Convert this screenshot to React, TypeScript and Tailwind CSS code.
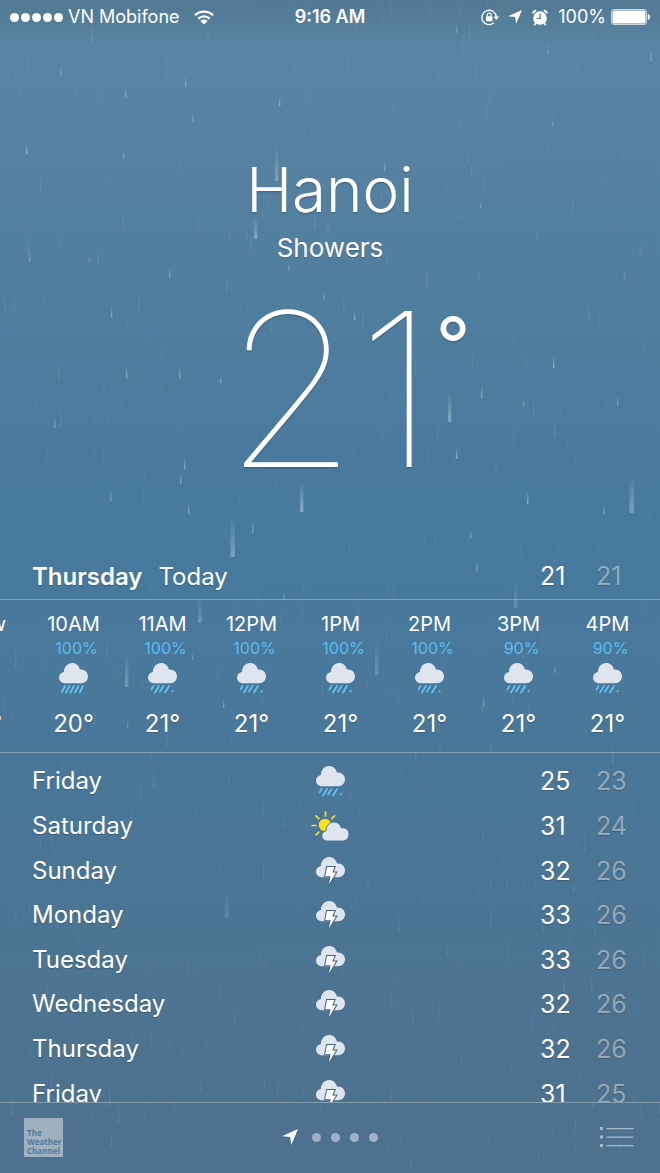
import React from "react";

type Condition = "rain" | "showers" | "partly" | "storm";

interface HourForecast {
  label: string;
  chance: string;
  condition: Condition;
  temp: string;
}

interface DayForecast {
  day: string;
  condition: Condition;
  high: number;
  low: number;
}

const hours: HourForecast[] = [
  { label: "Now", chance: "", condition: "rain", temp: "21°" },
  { label: "10AM", chance: "100%", condition: "rain", temp: "20°" },
  { label: "11AM", chance: "100%", condition: "showers", temp: "21°" },
  { label: "12PM", chance: "100%", condition: "showers", temp: "21°" },
  { label: "1PM", chance: "100%", condition: "showers", temp: "21°" },
  { label: "2PM", chance: "100%", condition: "showers", temp: "21°" },
  { label: "3PM", chance: "90%", condition: "showers", temp: "21°" },
  { label: "4PM", chance: "90%", condition: "showers", temp: "21°" },
];

const days: DayForecast[] = [
  { day: "Friday", condition: "showers", high: 25, low: 23 },
  { day: "Saturday", condition: "partly", high: 31, low: 24 },
  { day: "Sunday", condition: "storm", high: 32, low: 26 },
  { day: "Monday", condition: "storm", high: 33, low: 26 },
  { day: "Tuesday", condition: "storm", high: 33, low: 26 },
  { day: "Wednesday", condition: "storm", high: 32, low: 26 },
  { day: "Thursday", condition: "storm", high: 32, low: 26 },
  { day: "Friday", condition: "storm", high: 31, low: 25 },
];

// [x, bottom y, length, width, opacity]
const brightDrops: number[][] = [
  [277, 181, 36, 4, 0.3],
  [256, 239, 24, 4, 0.35],
  [302, 512, 30, 4, 0.45],
  [450, 422, 32, 4, 0.4],
  [632, 513, 38, 5, 0.35],
  [233, 557, 42, 5, 0.35],
  [127, 687, 34, 4, 0.3],
  [200, 623, 26, 4, 0.25],
  [377, 675, 34, 4, 0.25],
  [516, 608, 28, 4, 0.2],
  [227, 918, 28, 4, 0.15],
  [61, 75, 10, 2, 0.35],
  [126, 97, 12, 2, 0.4],
  [186, 87, 12, 2, 0.4],
  [193, 122, 10, 2, 0.3],
  [280, 106, 10, 2, 0.45],
  [27, 154, 12, 2, 0.5],
  [124, 159, 10, 2, 0.35],
  [30, 262, 14, 2, 0.35],
  [170, 278, 10, 2, 0.4],
  [112, 317, 10, 2, 0.45],
  [127, 379, 14, 2, 0.45],
  [180, 379, 14, 2, 0.4],
  [221, 383, 7, 2, 0.45],
  [55, 428, 13, 2, 0.4],
  [185, 469, 12, 2, 0.45],
  [181, 484, 12, 2, 0.4],
  [111, 501, 12, 2, 0.4],
  [189, 514, 13, 2, 0.4],
  [253, 533, 12, 2, 0.4],
  [385, 171, 12, 2, 0.35],
  [481, 208, 8, 2, 0.35],
  [553, 126, 10, 2, 0.25],
  [651, 61, 11, 2, 0.4],
  [548, 54, 8, 2, 0.3],
  [89, 262, 8, 1, 0.3],
  [355, 320, 10, 2, 0.4],
  [554, 368, 12, 2, 0.55],
  [482, 398, 13, 2, 0.5],
  [524, 406, 9, 2, 0.4],
  [618, 406, 12, 2, 0.35],
  [457, 459, 12, 2, 0.5],
  [528, 504, 14, 2, 0.5],
  [604, 514, 9, 2, 0.4],
  [471, 538, 9, 2, 0.45],
  [477, 571, 9, 2, 0.45],
  [324, 299, 7, 2, 0.4],
  [289, 271, 8, 2, 0.35],
  [224, 708, 9, 2, 0.4],
  [284, 599, 6, 2, 0.4],
  [193, 660, 8, 2, 0.3],
  [555, 673, 10, 2, 0.3],
  [484, 706, 9, 2, 0.35],
  [128, 728, 10, 2, 0.25],
  [92, 42, 16, 1, 0.3],
  [457, 33, 12, 2, 0.3],
];

// fine drizzle behind everything, spread by a small fixed-seed generator
const drizzle: number[][] = (() => {
  let seed = 71;
  const next = () => {
    seed = (seed * 16807) % 2147483647;
    return seed / 2147483647;
  };
  return Array.from({ length: 420 }, () => [
    Math.round(next() * 660),
    Math.round(next() * 1190),
    Math.round(8 + next() * 18),
    1 + Math.round(next()),
    0.04 + next() * 0.1,
  ]);
})();

const Rain: React.FC = () => (
  <svg
    className="pointer-events-none absolute inset-0 h-full w-full"
    viewBox="0 0 660 1173"
    preserveAspectRatio="xMidYMid slice"
    aria-hidden="true"
  >
    <defs>
      <linearGradient id="drop" x1="0" y1="0" x2="0" y2="1">
        <stop offset="0" stopColor="#d5eaf5" stopOpacity="0" />
        <stop offset="1" stopColor="#d5eaf5" />
      </linearGradient>
    </defs>
    {[...drizzle, ...brightDrops].map(([x, y, length, width, opacity], i) => (
      <rect
        key={i}
        x={x - width / 2}
        y={y - length}
        width={width > 1 ? width - 0.6 : width}
        height={length}
        rx={width > 3 ? 1 : 0}
        fill="url(#drop)"
        opacity={opacity}
      />
    ))}
  </svg>
);

const CloudShape: React.FC = () => (
  <path
    fill="#dfe5ee"
    d="M6.2 20.2C2.6 20.2 0 17.7 0 14.4c0-2.800 2-4.900 4.900-5.500C5 3.900 8.500 0 13.200 0c3.800 0 6.700 2.400 7.700 6.500 4.600-.6 8.100 2.500 8.100 6.800 0 4-2.900 6.900-6.900 6.900Z"
  />
);

const WeatherIcon: React.FC<{ condition: Condition }> = ({ condition }) => {
  if (condition === "partly") {
    return (
      <svg width="38" height="30" viewBox="0 0 38 30" role="img" aria-label="Partly cloudy">
        <g stroke="#ffe01b" strokeWidth="1.700" strokeLinecap="round">
          <path d="M14.500 1v4M23.500 4.800l-2.800 2.800M5 4.800l2.800 2.800M1 14.500h4M5 24l2.800-2.800" />
        </g>
        <circle cx="14" cy="14" r="6.200" fill="#ffe01b" />
        <path
          fill="#dfe5ee"
          stroke="#4a7696"
          strokeWidth="1"
          d="M16.500 30c-3.400 0-5.800-2.200-5.800-5.100 0-2.500 1.700-4.300 4.200-4.900.1-5.200 3.700-8.900 8.100-8.900 3.500 0 6.200 2.100 7.200 5.700 4.500-.5 7.800 2.300 7.800 6.400 0 4-2.800 6.800-6.600 6.800Z"
        />
      </svg>
    );
  }

  if (condition === "storm") {
    return (
      <svg width="29" height="28" viewBox="0 0 29 28" role="img" aria-label="Thunderstorms">
        <CloudShape />
        <path
          fill="#ffffff"
          stroke="#41657f"
          strokeWidth="2"
          paintOrder="stroke"
          d="M11 10h7.500l-2.300 5.500h3.800L12.800 27.500l1.800-8.300H9.200Z"
        />
      </svg>
    );
  }

  return (
    <svg
      width="29"
      height="31"
      viewBox="0 0 29 31"
      role="img"
      aria-label={condition === "rain" ? "Rain" : "Showers"}
    >
      <CloudShape />
      <path
        stroke="#62c2ef"
        strokeWidth="1.800"
        strokeLinecap="round"
        fill="none"
        d={
          condition === "rain"
            ? "M6 23l-3 6M10.500 23l-3.500 6.500M15 23l-3.500 6.500M19.500 23l-3.500 6.500M24 23l-3 6"
            : "M5.500 23l-2 3.500M11 23l-4 6.500M15.500 23l-3.500 5.500M21 23l-4 6.500M24.800 28l-.3.500"
        }
      />
    </svg>
  );
};

const LocationArrow: React.FC<{ size: number }> = ({ size }) => (
  <svg width={size} height={size} viewBox="0 0 16 16" aria-hidden="true">
    <path fill="#ffffff" d="M16 0 9.200 16 8.200 8.100 0 7.200Z" />
  </svg>
);

const StatusBar: React.FC = () => (
  <header className="grid h-[34px] grid-cols-[1fr_auto_1fr] items-center pr-[10px] pl-[10px] text-lg">
    <div className="flex items-center gap-[5px]">
      <div className="flex gap-[2px]">
        {[1, 2, 3, 4, 5].map((bar) => (
          <span key={bar} className="size-[9px] rounded-full bg-white" />
        ))}
      </div>
      <span>VN Mobifone</span>
      <svg width="20" height="15" viewBox="0 0 20 15" className="ml-[9px]" role="img" aria-label="Wi-Fi">
        <g fill="none" stroke="#ffffff" strokeWidth="2.200">
          <path d="M1 5.200a13 13 0 0 1 18 0" />
          <path d="M4.300 8.600a8.300 8.300 0 0 1 11.400 0" />
        </g>
        <path fill="#ffffff" d="M10 14.600 6.300 10.900a5.300 5.300 0 0 1 7.400 0Z" />
      </svg>
    </div>

    <span className="font-semibold">9:16 AM</span>

    <div className="flex items-center justify-end gap-[9px]">
      <svg width="18" height="17" viewBox="0 0 18 17" role="img" aria-label="Rotation locked">
        <path fill="none" stroke="#ffffff" strokeWidth="1.300" d="M13 13.800A7.200 7.200 0 1 1 15.300 8" />
        <path fill="#ffffff" d="M12.600 7.500H18l-2.700 3.600Z" />
        <rect x="5" y="7.200" width="6.400" height="5" rx=".6" fill="#ffffff" />
        <path fill="none" stroke="#ffffff" strokeWidth="1.200" d="M6.300 7.500V6a1.900 1.900 0 0 1 3.800 0v1.500" />
      </svg>
      <LocationArrow size={14} />
      <svg width="18" height="17" viewBox="0 0 18 17" role="img" aria-label="Alarm set">
        <circle cx="9" cy="9" r="6.800" fill="#ffffff" />
        <path
          fill="none"
          stroke="#ffffff"
          strokeWidth="1.800"
          strokeLinecap="round"
          d="M2 3.500 4.500 1.500M16 3.500l-2.500-2M4.500 14.500l-.8 1M13.500 14.500l.8 1"
        />
        <path fill="none" stroke="#52809f" strokeWidth="1.300" d="M9.200 4.800v4.500H5.800" />
      </svg>
      <div className="flex items-center gap-[5px]">
        <span>100%</span>
        <svg width="39" height="16" viewBox="0 0 39 16" role="img" aria-label="Battery full">
          <rect x=".5" y=".5" width="35" height="15" rx="2.500" fill="none" stroke="#ffffff" strokeOpacity=".7" />
          <rect x="1.500" y="1.500" width="33" height="13" rx="1.500" fill="#ffffff" />
          <path fill="#ffffff" d="M36.800 5c1.600.4 2.200 1.500 2.200 3s-.6 2.600-2.200 3Z" />
        </svg>
      </div>
    </div>
  </header>
);

const CurrentWeather: React.FC = () => (
  <section className="flex flex-col items-center pt-[116px] pb-[57px]">
    <h1 className="text-[62px] leading-[80px] font-light text-shadow-sm">Hanoi</h1>
    <p className="text-[26px] leading-9 text-shadow-xs">Showers</p>
    <p className="relative mt-4 text-[214px] leading-[216px] font-thin text-shadow-sm">
      21
      <span className="absolute top-0 left-full text-[76px] leading-[124px] font-normal">°</span>
    </p>
  </section>
);

const HourlyForecast: React.FC = () => (
  <section className="border-y border-white/30">
    <ul className="flex justify-end overflow-hidden pt-3 pr-2 pb-3">
      {hours.map((hour) => (
        <li key={hour.label} className="flex w-[89px] shrink-0 flex-col items-center">
          <span className="text-xl leading-6">{hour.label}</span>
          <span className="h-6 pl-[6px] text-base leading-6 text-[#5cbcf0]">{hour.chance}</span>
          <span className="mt-[3px] mb-[14px]">
            <WeatherIcon condition={hour.condition} />
          </span>
          <span className="text-2xl leading-8 text-shadow-xs">{hour.temp}</span>
        </li>
      ))}
    </ul>
  </section>
);

const DailyForecast: React.FC = () => (
  <section className="min-h-0 flex-1 overflow-hidden pt-[6px]">
    <table className="h-[357px] w-full table-fixed text-left text-[25px] leading-8">
      <tbody>
        {days.map((day, i) => (
          <tr key={i}>
            <th scope="row" className="p-0 pl-8 text-2xl font-normal text-shadow-xs">
              {day.day}
            </th>
            <td className="w-10 p-0">
              <div className="flex justify-center">
                <WeatherIcon condition={day.condition} />
              </div>
            </td>
            <td className="p-0">
              <div className="flex justify-end pr-8 text-shadow-xs">
                <span className="w-14">{day.high}</span>
                <span className="w-8 text-white/45">{day.low}</span>
              </div>
            </td>
          </tr>
        ))}
      </tbody>
    </table>
  </section>
);

const BottomBar: React.FC = () => (
  <footer className="grid h-[71px] shrink-0 grid-cols-[1fr_auto_1fr] items-center border-t border-white/30 px-6 pb-[2px]">
    <a
      href="#weather-channel"
      className="flex size-[39px] flex-col justify-end bg-white/45 pb-[2px] pl-[3px] font-['Open_Sans',sans-serif] text-[8px] leading-[9px] font-bold text-[#52799a]"
    >
      <span>The</span>
      <span>Weather</span>
      <span>Channel</span>
    </a>

    <nav className="flex items-center gap-[10px]" aria-label="Locations">
      <button type="button" aria-label="Current location" className="mr-1">
        <LocationArrow size={16} />
      </button>
      {[1, 2, 3, 4].map((page) => (
        <button
          key={page}
          type="button"
          aria-label={`Location ${page}`}
          className="size-[9px] rounded-full bg-[#9fb0cb]"
        />
      ))}
    </nav>

    <button type="button" aria-label="All locations" className="justify-self-end">
      <svg width="36" height="22" viewBox="0 0 36 22" aria-hidden="true">
        <g fill="#a3bccd">
          <path d="M0 1h3v3H0ZM0 9.500h3v3H0ZM0 18h3v3H0Z" />
          <path d="M6.500 2h27v1.300h-27ZM6.500 10.500h27v1.300h-27ZM6.500 19h27v1.300h-27Z" />
        </g>
      </svg>
    </button>
  </footer>
);

const App: React.FC = () => (
  <div className="relative h-screen overflow-hidden bg-linear-to-b from-[#527892] via-[#477a9f] via-45% to-[#4e718d] font-[Inter,'Liberation_Sans',sans-serif] text-white">
    <div className="absolute inset-0 bg-linear-to-b from-transparent via-[#5f8cae]/60 via-4% to-transparent to-40%" />
    <Rain />
    <main className="relative flex h-full flex-col">
      <StatusBar />
      <CurrentWeather />
      <div className="flex h-11 shrink-0 items-center pr-8 pl-8 text-[25px] text-shadow-xs">
        <span className="text-2xl font-semibold">Thursday</span>
        <span className="ml-4 text-2xl">Today</span>
        <span className="ml-auto w-14">21</span>
        <span className="w-8 text-white/45">21</span>
      </div>
      <HourlyForecast />
      <DailyForecast />
      <BottomBar />
    </main>
  </div>
);

export default App;
